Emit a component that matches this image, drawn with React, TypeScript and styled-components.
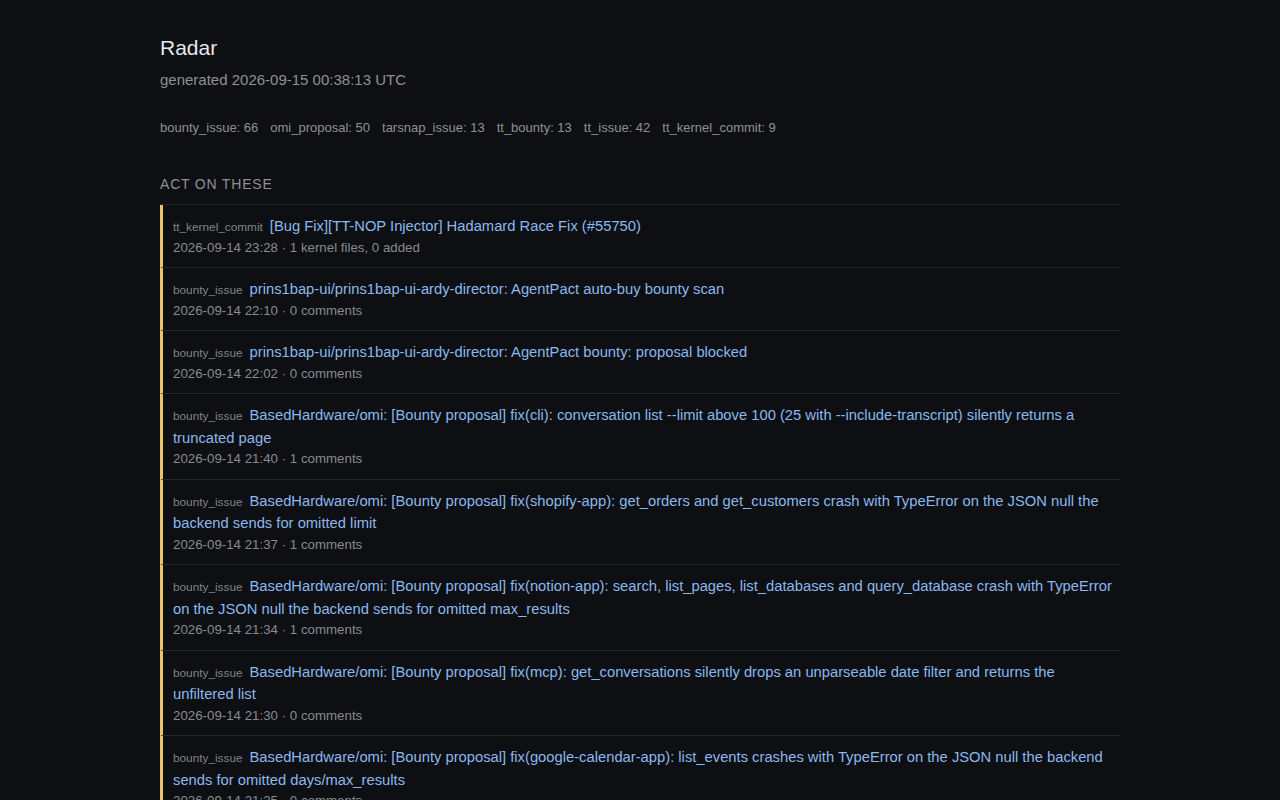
import styled, { createGlobalStyle } from "styled-components";

const Global = createGlobalStyle`
  html, body {
    margin: 0;
    background: #0d0f13;
  }
  body {
    font-family: "Liberation Sans", Arial, sans-serif;
    color: #d6d9de;
  }
`;

const S = {
  Page: styled.main`
    width: 960px;
    margin: 0 auto;
    padding: 34px 0 40px;
  `,
  Title: styled.h1`
    margin: 0;
    font-size: 21px;
    font-weight: 400;
    line-height: 28px;
    color: #e6e8eb;
  `,
  Generated: styled.p`
    margin: 8px 0 0;
    font-size: 15px;
    line-height: 20px;
    color: #8d9197;
  `,
  Counts: styled.div`
    display: flex;
    gap: 12px;
    margin-top: 29px;
    font-size: 13px;
    line-height: 18px;
    color: #8d9197;
  `,
  Section: styled.h2`
    margin: 37px 0 10px;
    font-size: 14px;
    font-weight: 400;
    line-height: 20px;
    letter-spacing: 0.8px;
    text-transform: uppercase;
    color: #8d9197;
  `,
  List: styled.ul`
    list-style: none;
    margin: 0;
    padding: 0;
    border-top: 1px solid #22262d;
  `,
  Item: styled.li`
    border-left: 3px solid #e9c46a;
    border-bottom: 1px solid #22262d;
    padding: 10px 4px 9.5px 10px;
  `,
  Head: styled.div`
    font-size: 14.75px;
    line-height: 22.5px;
  `,
  Kind: styled.span`
    font-size: 11.8px;
    line-height: 1;
    color: #80848a;
    margin-right: 7px;
  `,
  Link: styled.a`
    color: #8bb8ec;
    text-decoration: none;
  `,
  Meta: styled.div`
    font-size: 13.3px;
    line-height: 20px;
    color: #878b91;
  `,
};

type Entry = { kind: string; title: string; meta: string };

const counts = [
  "bounty_issue: 66",
  "omi_proposal: 50",
  "tarsnap_issue: 13",
  "tt_bounty: 13",
  "tt_issue: 42",
  "tt_kernel_commit: 9",
];

const entries: Entry[] = [
  {
    kind: "tt_kernel_commit",
    title: "[Bug Fix][TT-NOP Injector] Hadamard Race Fix (#55750)",
    meta: "2026-09-14 23:28 · 1 kernel files, 0 added",
  },
  {
    kind: "bounty_issue",
    title: "prins1bap-ui/prins1bap-ui-ardy-director: AgentPact auto-buy bounty scan",
    meta: "2026-09-14 22:10 · 0 comments",
  },
  {
    kind: "bounty_issue",
    title: "prins1bap-ui/prins1bap-ui-ardy-director: AgentPact bounty: proposal blocked",
    meta: "2026-09-14 22:02 · 0 comments",
  },
  {
    kind: "bounty_issue",
    title:
      "BasedHardware/omi: [Bounty proposal] fix(cli): conversation list --limit above 100 (25 with --include-transcript) silently returns a truncated page",
    meta: "2026-09-14 21:40 · 1 comments",
  },
  {
    kind: "bounty_issue",
    title:
      "BasedHardware/omi: [Bounty proposal] fix(shopify-app): get_orders and get_customers crash with TypeError on the JSON null the backend sends for omitted limit",
    meta: "2026-09-14 21:37 · 1 comments",
  },
  {
    kind: "bounty_issue",
    title:
      "BasedHardware/omi: [Bounty proposal] fix(notion-app): search, list_pages, list_databases and query_database crash with TypeError on the JSON null the backend sends for omitted max_results",
    meta: "2026-09-14 21:34 · 1 comments",
  },
  {
    kind: "bounty_issue",
    title:
      "BasedHardware/omi: [Bounty proposal] fix(mcp): get_conversations silently drops an unparseable date filter and returns the unfiltered list",
    meta: "2026-09-14 21:30 · 0 comments",
  },
  {
    kind: "bounty_issue",
    title:
      "BasedHardware/omi: [Bounty proposal] fix(google-calendar-app): list_events crashes with TypeError on the JSON null the backend sends for omitted days/max_results",
    meta: "2026-09-14 21:25 · 0 comments",
  },
];

export default function App() {
  return (
    <>
      <Global />
      <S.Page>
        <S.Title>Radar</S.Title>
        <S.Generated>generated 2026-09-15 00:38:13 UTC</S.Generated>
        <S.Counts>
          {counts.map((c) => (
            <span key={c}>{c}</span>
          ))}
        </S.Counts>
        <S.Section>Act on these</S.Section>
        <S.List>
          {entries.map((e, i) => (
            <S.Item key={i}>
              <S.Head>
                <S.Kind>{e.kind}</S.Kind>
                <S.Link href="#">{e.title}</S.Link>
              </S.Head>
              <S.Meta>{e.meta}</S.Meta>
            </S.Item>
          ))}
        </S.List>
      </S.Page>
    </>
  );
}
